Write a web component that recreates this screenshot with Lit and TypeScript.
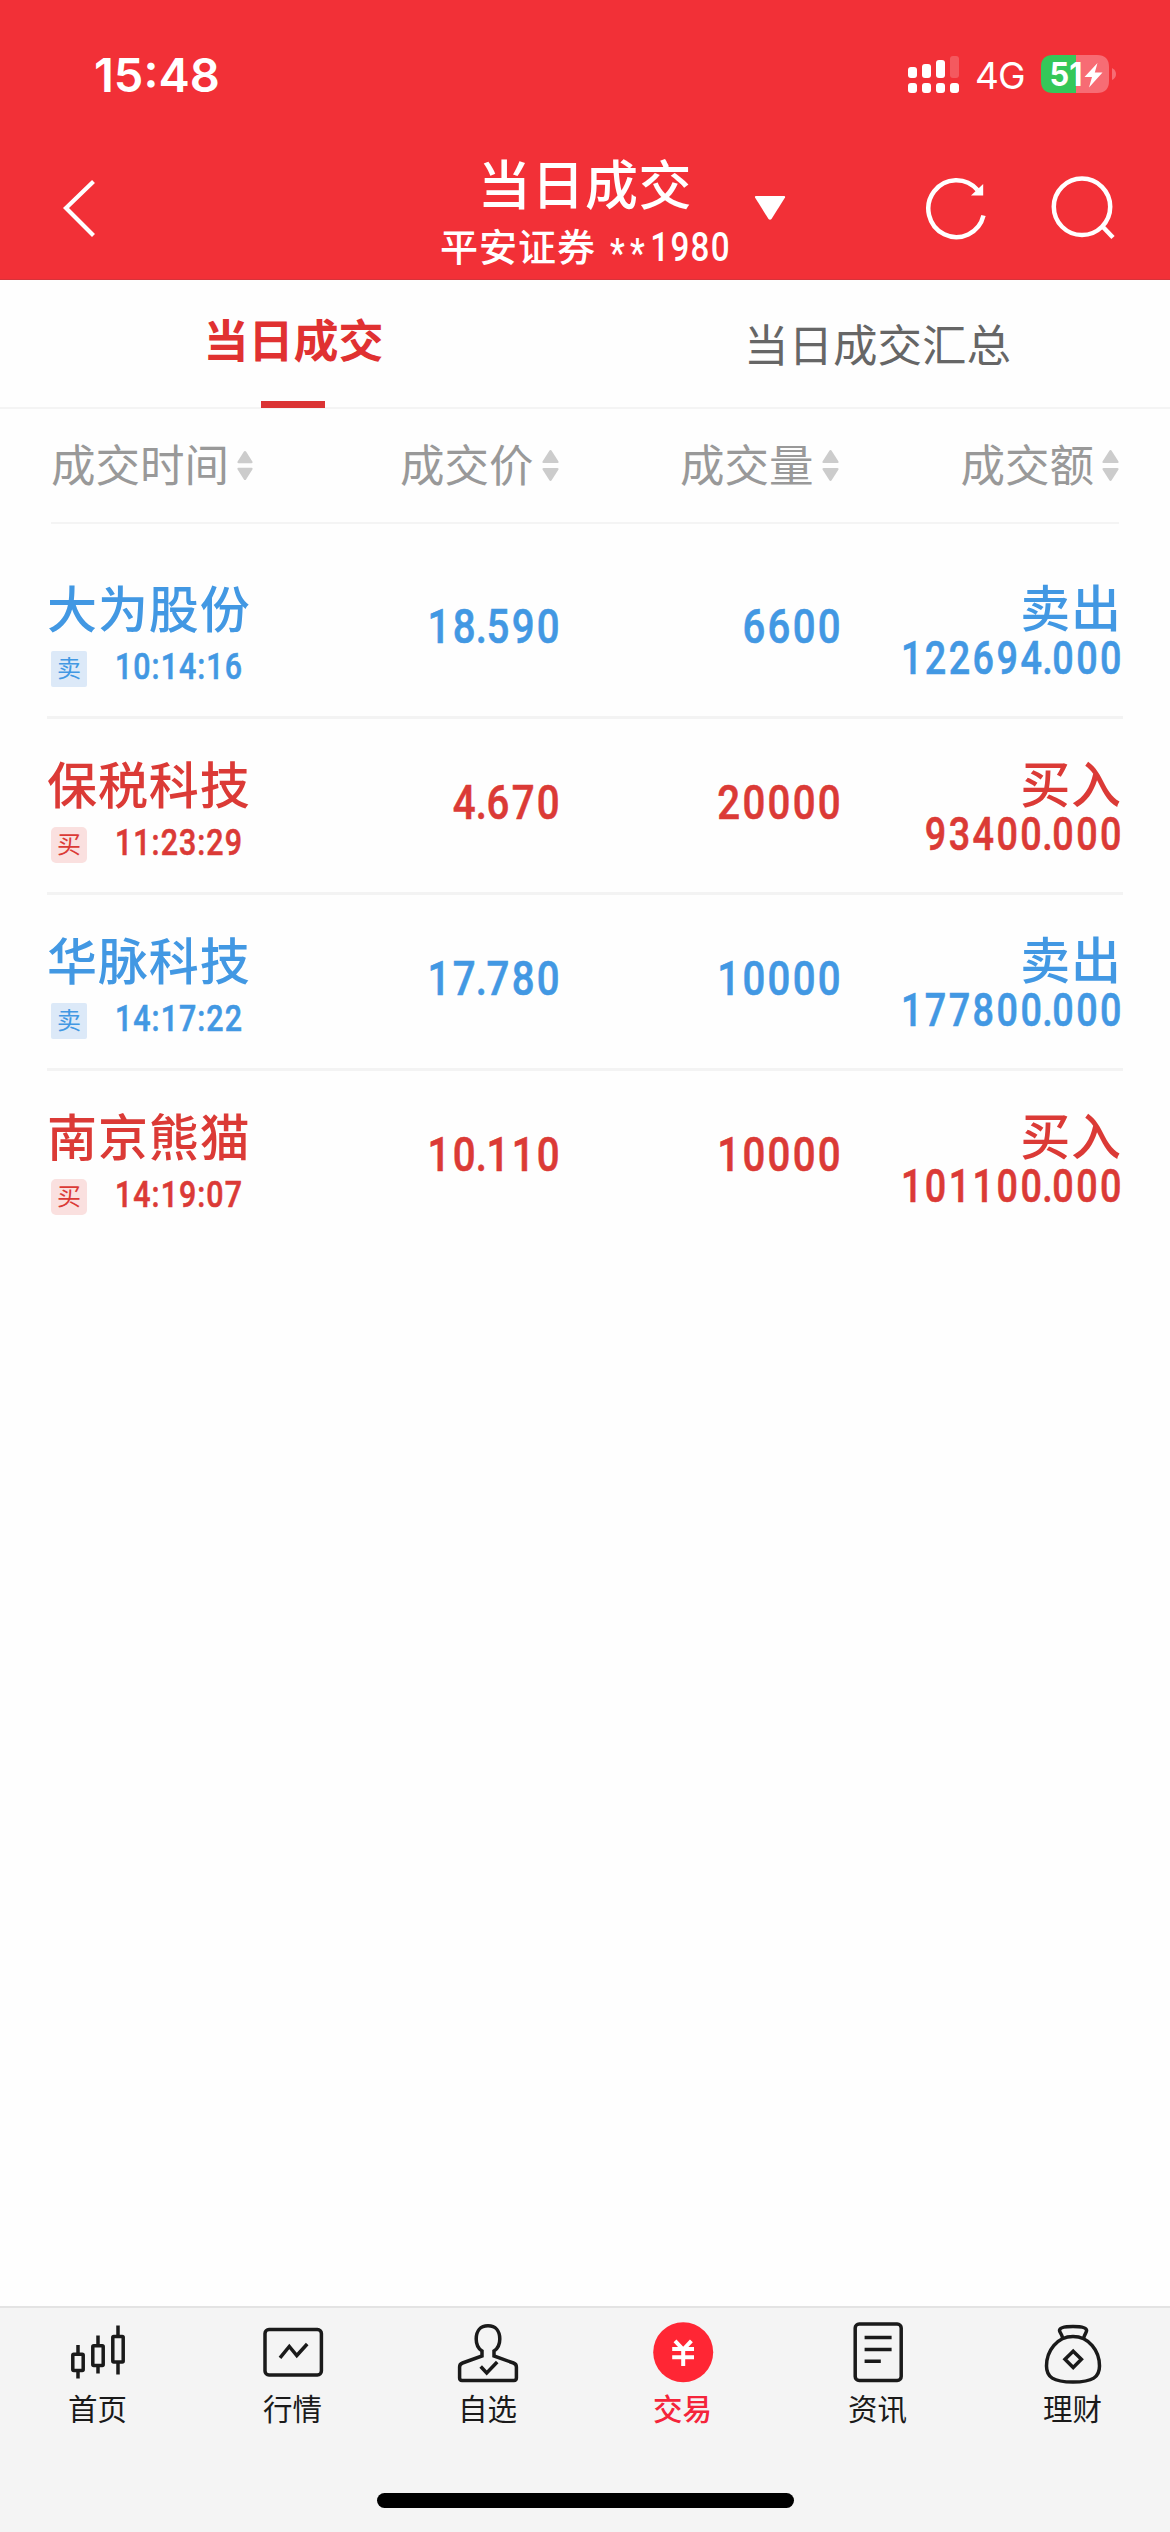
import { LitElement, html, svg, css } from "lit";
import { customElement, property } from "lit/decorators.js";
import { classMap } from "lit/directives/class-map.js";

interface Trade {
  name: string;
  time: string;
  price: string;
  volume: string;
  amount: string;
  side: "buy" | "sell";
}

const trades: Trade[] = [
  { name: "大为股份", time: "10:14:16", price: "18.590", volume: "6600", amount: "122694.000", side: "sell" },
  { name: "保税科技", time: "11:23:29", price: "4.670", volume: "20000", amount: "93400.000", side: "buy" },
  { name: "华脉科技", time: "14:17:22", price: "17.780", volume: "10000", amount: "177800.000", side: "sell" },
  { name: "南京熊猫", time: "14:19:07", price: "10.110", volume: "10000", amount: "101100.000", side: "buy" },
];

const columns = ["成交时间", "成交价", "成交量", "成交额"];

const navIcons = {
  home: svg`<path d="M20 25v9M20 51v7.5M40 15.5v10M40 46v7.5M60 5.5v10.5M60 42v12.5"/>
    <rect x="14.8" y="34.2" width="10.4" height="16.2" rx="1"/>
    <rect x="34.8" y="25.8" width="10.4" height="19.8" rx="1"/>
    <rect x="54.8" y="16.4" width="10.4" height="25.6" rx="1"/>`,
  market: svg`<rect x="12" y="9.6" width="56.4" height="45.4" rx="4"/><path d="M27 37.8 36.3 26.5 43.8 35.5 54.2 24"/>`,
  watch: svg`<path d="M34 36V31C30 28.500 28.200 25 28.200 19C28.200 11 32.500 5.800 40 5.800S51.800 11 51.800 19C51.800 25 50 28.500 46 31V36L65.500 43Q68.400 44 68.400 47V58Q68.400 60.400 66 60.400H14Q11.600 60.400 11.600 58V47Q11.600 44 14.500 43Z"/>
    <path d="M32.700 46.500 38.700 53 49.200 42"/>`,
  trade: svg`<circle cx="40.200" cy="32.300" r="30" fill="#ff2634" stroke="none"/>
    <path stroke="#fff" stroke-width="4" d="M32 20.800 40.200 29.500 48.400 20.800M29.200 28.900H51M29.200 37.200H51M40.200 28V46"/>`,
  news: svg`<rect x="17.200" y="4" width="46" height="56.400" rx="4"/><path d="M26.600 17.600H53.600M26.600 29.600H53.600M26.600 41.300H42.800"/>`,
  wealth: svg`<path d="M29.800 18.500C29 14 26.500 12.500 26.500 10.500C26.500 7.500 33 6.500 40 6.500S53.600 7.500 53.600 10.500C53.600 12.500 51.500 14 50.500 18.500"/>
    <path d="M40 16.600C24 16.600 13.500 31 13.500 46C13.500 57 20 62 40 62S66.500 57 66.500 46C66.500 31 56 16.600 40 16.600Z"/>
    <path d="M40.200 31.200 48.400 39.300 40.200 47.500 32 39.300Z"/>`,
};

type NavKey = keyof typeof navIcons;

const navItems: { key: NavKey; label: string }[] = [
  { key: "home", label: "首页" },
  { key: "market", label: "行情" },
  { key: "watch", label: "自选" },
  { key: "trade", label: "交易" },
  { key: "news", label: "资讯" },
  { key: "wealth", label: "理财" },
];

@customElement("status-bar")
class StatusBar extends LitElement {
  static styles = css`
    :host {
      display: flex;
      align-items: flex-start;
      justify-content: space-between;
      box-sizing: border-box;
      height: 140px;
      padding: 52px 53px 0 94px;
      color: #fff;
      font-family: Inter, "Liberation Sans", sans-serif;
    }
    .clock {
      font-size: 47px;
      line-height: 46px;
      font-weight: 600;
    }
    .right {
      display: flex;
      align-items: flex-start;
    }
    .signal {
      width: 52px;
      height: 38px;
      margin: 4px 15px 0 0;
    }
    .net {
      width: 66px;
      font-size: 37px;
      line-height: 38px;
      padding-top: 5px;
      letter-spacing: -1px;
      box-sizing: border-box;
    }
    .battery {
      width: 76px;
      height: 38px;
      margin-top: 3px;
    }
    .level {
      font: 700 33px Inter, "Liberation Sans", sans-serif;
    }
  `;
  render() {
    return html`
      <span class="clock">15:48</span>
      <div class="right">
        <svg class="signal" viewBox="0 0 52 38" fill="#fff">
          <rect x="0" y="11" width="9" height="11" rx="3" />
          <rect x="14" y="8" width="9" height="14" rx="3" />
          <rect x="28" y="4" width="9" height="18" rx="3" />
          <rect x="42" y="0" width="9" height="22" rx="3" opacity=".2" />
          <rect x="0" y="27" width="9" height="10" rx="3" />
          <rect x="14" y="27" width="9" height="10" rx="3" />
          <rect x="28" y="27" width="9" height="10" rx="3" />
          <rect x="42" y="27" width="9" height="10" rx="3" />
        </svg>
        <span class="net">4G</span>
        <svg class="battery" viewBox="0 0 76 38">
          <path d="M35 0H56Q68 0 68 12V26Q68 38 56 38H35Z" fill="#f76c74" />
          <path d="M35 0H12Q0 0 0 12V26Q0 38 12 38H35Z" fill="#34c759" />
          <path d="M71 13Q75 15 75 19T71 25Z" fill="#f76c74" />
          <text class="level" x="8.500" y="31" fill="#fff" textLength="33" lengthAdjust="spacingAndGlyphs">51</text>
          <path d="M56.500 8 43.500 22H51L48 32.500 61.500 17.500H53.800Z" fill="#fff" />
        </svg>
      </div>
    `;
  }
}

@customElement("title-bar")
class TitleBar extends LitElement {
  static styles = css`
    :host {
      display: grid;
      grid-template-columns: 440px 290px 1fr auto;
      align-items: start;
      box-sizing: border-box;
      height: 140px;
      padding-right: 53px;
      color: #fff;
      border-bottom: 1px solid #d6333a;
      font-family: Roboto, "Noto Sans CJK SC", sans-serif;
    }
    .back {
      width: 34px;
      height: 60px;
      margin: 38px 0 0 61px;
    }
    .titles {
      display: flex;
      flex-direction: column;
      align-items: center;
      white-space: nowrap;
      font-weight: 500;
    }
    .title {
      padding-top: 17px;
      font-size: 53px;
      line-height: 60px;
      letter-spacing: 0.6px;
    }
    .sub {
      display: flex;
      align-self: stretch;
      font-size: 38px;
      line-height: 44px;
      padding-top: 9px;
      letter-spacing: 1px;
    }
    .masked {
      transform: scaleX(0.83);
      transform-origin: left;
      margin-left: 14px;
      font-size: 40px;
      letter-spacing: 1.6px;
    }
    .stars {
      display: inline-block;
      transform: translateY(6px);
      letter-spacing: 6.5px;
    }
    .drop {
      width: 32px;
      height: 26px;
      margin: 55px 0 0 24px;
    }
    .actions {
      display: flex;
      gap: 58px;
      padding-top: 33px;
    }
    .action {
      width: 68px;
      height: 68px;
    }
  `;
  render() {
    return html`
      <svg class="back" viewBox="0 0 34 60" fill="none" stroke="#fff" stroke-width="4.200">
        <path d="M32.500 3.500 5 30 32.500 57.500" />
      </svg>
      <div class="titles">
        <span class="title">当日成交</span>
        <div class="sub">
          <span>平安证券</span>
          <span class="masked"><span class="stars">**</span>1980</span>
        </div>
      </div>
      <svg class="drop" viewBox="0 0 32 26" fill="#fff">
        <path d="M2 1H30Q31.500 1 31 2.500L17.500 24Q16 25.500 14.500 24L1 2.500Q.5 1 2 1Z" />
      </svg>
      <div class="actions">
        <svg class="action" viewBox="921 173 68 68" fill="none" stroke="#fff" stroke-width="4.500">
          <path d="M975.500 190A28 28.500 0 1 0 981.500 215.500" />
          <path d="M981.200 184V195.500H969Z" fill="#fff" stroke="none" />
        </svg>
        <svg class="action" viewBox="1047 173 68 68" fill="none" stroke="#fff" stroke-width="4.500">
          <circle cx="1080" cy="206.800" r="28.200" />
          <path d="M1100.500 226.500 1111 237.500" />
        </svg>
      </div>
    `;
  }
}

@customElement("trade-row")
class TradeRow extends LitElement {
  @property({ attribute: false }) trade!: Trade;
  static styles = css`
    :host {
      display: block;
      font-family: Roboto, "Noto Sans CJK SC", sans-serif;
    }
    .row {
      display: grid;
      grid-template-columns: 260px 252px 281px 283px;
      height: 173px;
      font-weight: 500;
      white-space: nowrap;
    }
    .sell {
      color: #4298e3;
    }
    .buy {
      color: #db3a36;
    }
    .name {
      padding-top: 38px;
      font-size: 50px;
      line-height: 60px;
      letter-spacing: 0.9px;
    }
    .meta {
      display: flex;
      align-items: flex-start;
      padding: 10px 0 0 4px;
    }
    .tag {
      width: 36px;
      height: 36px;
      font-size: 24px;
      line-height: 37px;
      font-weight: 400;
      text-align: center;
      border-radius: 2px;
    }
    .sell .tag {
      background: #dce9f8;
    }
    .buy .tag {
      background: #fae0df;
      border-radius: 5px;
    }
    .num {
      transform: scaleX(0.82);
      transform-origin: right;
      text-align: right;
      -webkit-text-stroke: 0.6px currentColor;
    }
    .point {
      letter-spacing: -0.5px;
      margin-left: -2.5px;
    }
    .time {
      transform-origin: left;
      text-align: left;
      margin-left: 28px;
      font-size: 37px;
      line-height: 31px;
      letter-spacing: 1.3px;
    }
    .mid {
      padding-top: 54px;
      font-size: 49px;
      line-height: 60px;
      letter-spacing: 2.8px;
      margin-right: -3px;
    }
    .side {
      padding: 42px 1px 0 0;
      text-align: right;
      font-size: 50px;
      line-height: 50px;
      letter-spacing: 0.9px;
    }
    .amount {
      margin-top: 1px;
      font-size: 46px;
      line-height: 44px;
      letter-spacing: 3px;
      margin-right: -1px;
    }
  `;
  private decimal(value: string) {
    const [whole, fraction] = value.split(".");
    return html`${whole}<span class="point">.</span>${fraction}`;
  }
  render() {
    const t = this.trade;
    const sell = t.side === "sell";
    return html`
      <div class=${classMap({ row: true, sell, buy: !sell })}>
        <div>
          <div class="name">${t.name}</div>
          <div class="meta">
            <span class="tag">${sell ? "卖" : "买"}</span>
            <span class="num time">${t.time}</span>
          </div>
        </div>
        <div class="num mid">${this.decimal(t.price)}</div>
        <div class="num mid">${t.volume}</div>
        <div>
          <div class="side">${sell ? "卖出" : "买入"}</div>
          <div class="num amount">${this.decimal(t.amount)}</div>
        </div>
      </div>
    `;
  }
}

@customElement("bottom-nav")
class BottomNav extends LitElement {
  static styles = css`
    :host {
      display: flex;
      flex-direction: column;
      align-items: center;
      box-sizing: border-box;
      height: 226px;
      background: #f4f4f4;
      border-top: 2px solid #e3e3e3;
      font-family: "Noto Sans CJK SC", sans-serif;
    }
    .items {
      display: grid;
      grid-template-columns: repeat(6, 195px);
      height: 185px;
    }
    .item {
      display: flex;
      flex-direction: column;
      align-items: center;
      padding-top: 12px;
      color: #1a1a1a;
    }
    .active {
      color: #f5243a;
      font-weight: 500;
    }
    .icon {
      width: 80px;
      height: 66px;
    }
    .label {
      font-size: 29.5px;
      line-height: 40px;
      padding-top: 1px;
    }
    .home-bar {
      width: 417px;
      height: 15px;
      border-radius: 8px;
      background: #000;
    }
  `;
  render() {
    return html`
      <div class="items">
        ${navItems.map(
          (n) => html`
            <div class=${classMap({ item: true, active: n.key === "trade" })}>
              <svg class="icon" viewBox="0 0 80 66" fill="none" stroke="#1a1a1a" stroke-width="3.500">
                ${navIcons[n.key]}
              </svg>
              <span class="label">${n.label}</span>
            </div>
          `
        )}
      </div>
      <div class="home-bar"></div>
    `;
  }
}

@customElement("app-root")
class AppRoot extends LitElement {
  static styles = css`
    :host {
      display: flex;
      flex-direction: column;
      width: 1170px;
      height: 2532px;
      overflow: hidden;
      background: #fefefe;
      font-family: "Noto Sans CJK SC", sans-serif;
    }
    .header {
      background: #f23037;
      height: 280px;
    }
    .tabs {
      display: grid;
      grid-template-columns: 1fr 1fr;
      box-sizing: border-box;
      height: 129px;
      border-bottom: 2px solid #f4f4f4;
    }
    .tab {
      display: flex;
      flex-direction: column;
      align-items: center;
      justify-content: space-between;
      box-sizing: border-box;
      padding-top: 33px;
      font-size: 44.5px;
      line-height: 60px;
      color: #666;
    }
    .current {
      padding: 29px 0 0;
      color: #e03131;
      font-weight: 700;
    }
    .tab-text {
      padding-left: 2px;
      font-size: 45px;
    }
    .underline {
      width: 64px;
      height: 7px;
      margin-bottom: -1px;
      background: #db3334;
    }
    .columns {
      display: grid;
      grid-template-columns: 202px 305.5px 280px 280.5px;
      box-sizing: border-box;
      height: 115px;
      margin: 0 51px;
      padding-top: 24px;
      border-bottom: 2px solid #f4f4f4;
      color: #999;
      font-size: 44.5px;
      line-height: 60px;
      white-space: nowrap;
    }
    .column {
      display: flex;
      align-items: flex-start;
      justify-content: flex-end;
      gap: 8px;
    }
    .sort {
      width: 17px;
      height: 31px;
      margin-top: 17px;
    }
    .list {
      flex: 1;
      padding: 19px 47px 0;
    }
    .entry + .entry {
      border-top: 3px solid #f3f3f3;
    }
  `;
  render() {
    return html`
      <div class="header">
        <status-bar></status-bar>
        <title-bar></title-bar>
      </div>
      <div class="tabs">
        <div class="tab current">
          <span class="tab-text">当日成交</span>
          <span class="underline"></span>
        </div>
        <div class="tab"><span>当日成交汇总</span></div>
      </div>
      <div class="columns">
        ${columns.map(
          (c) => html`
            <div class="column">
              <span>${c}</span>
              <svg class="sort" viewBox="0 0 17 31" fill="#ccc">
                <path d="M8.500 0Q9.300 0 9.800 1L16.500 11.500Q17 13 15.500 13H1.500Q0 13 .5 11.500L7.200 1Q7.700 0 8.500 0Z" />
                <path d="M8.500 31Q9.300 31 9.800 30L16.500 19.500Q17 18 15.500 18H1.500Q0 18 .5 19.500L7.200 30Q7.700 31 8.500 31Z" />
              </svg>
            </div>
          `
        )}
      </div>
      <div class="list">
        ${trades.map((t) => html`<div class="entry"><trade-row .trade=${t}></trade-row></div>`)}
      </div>
      <bottom-nav></bottom-nav>
    `;
  }
}
